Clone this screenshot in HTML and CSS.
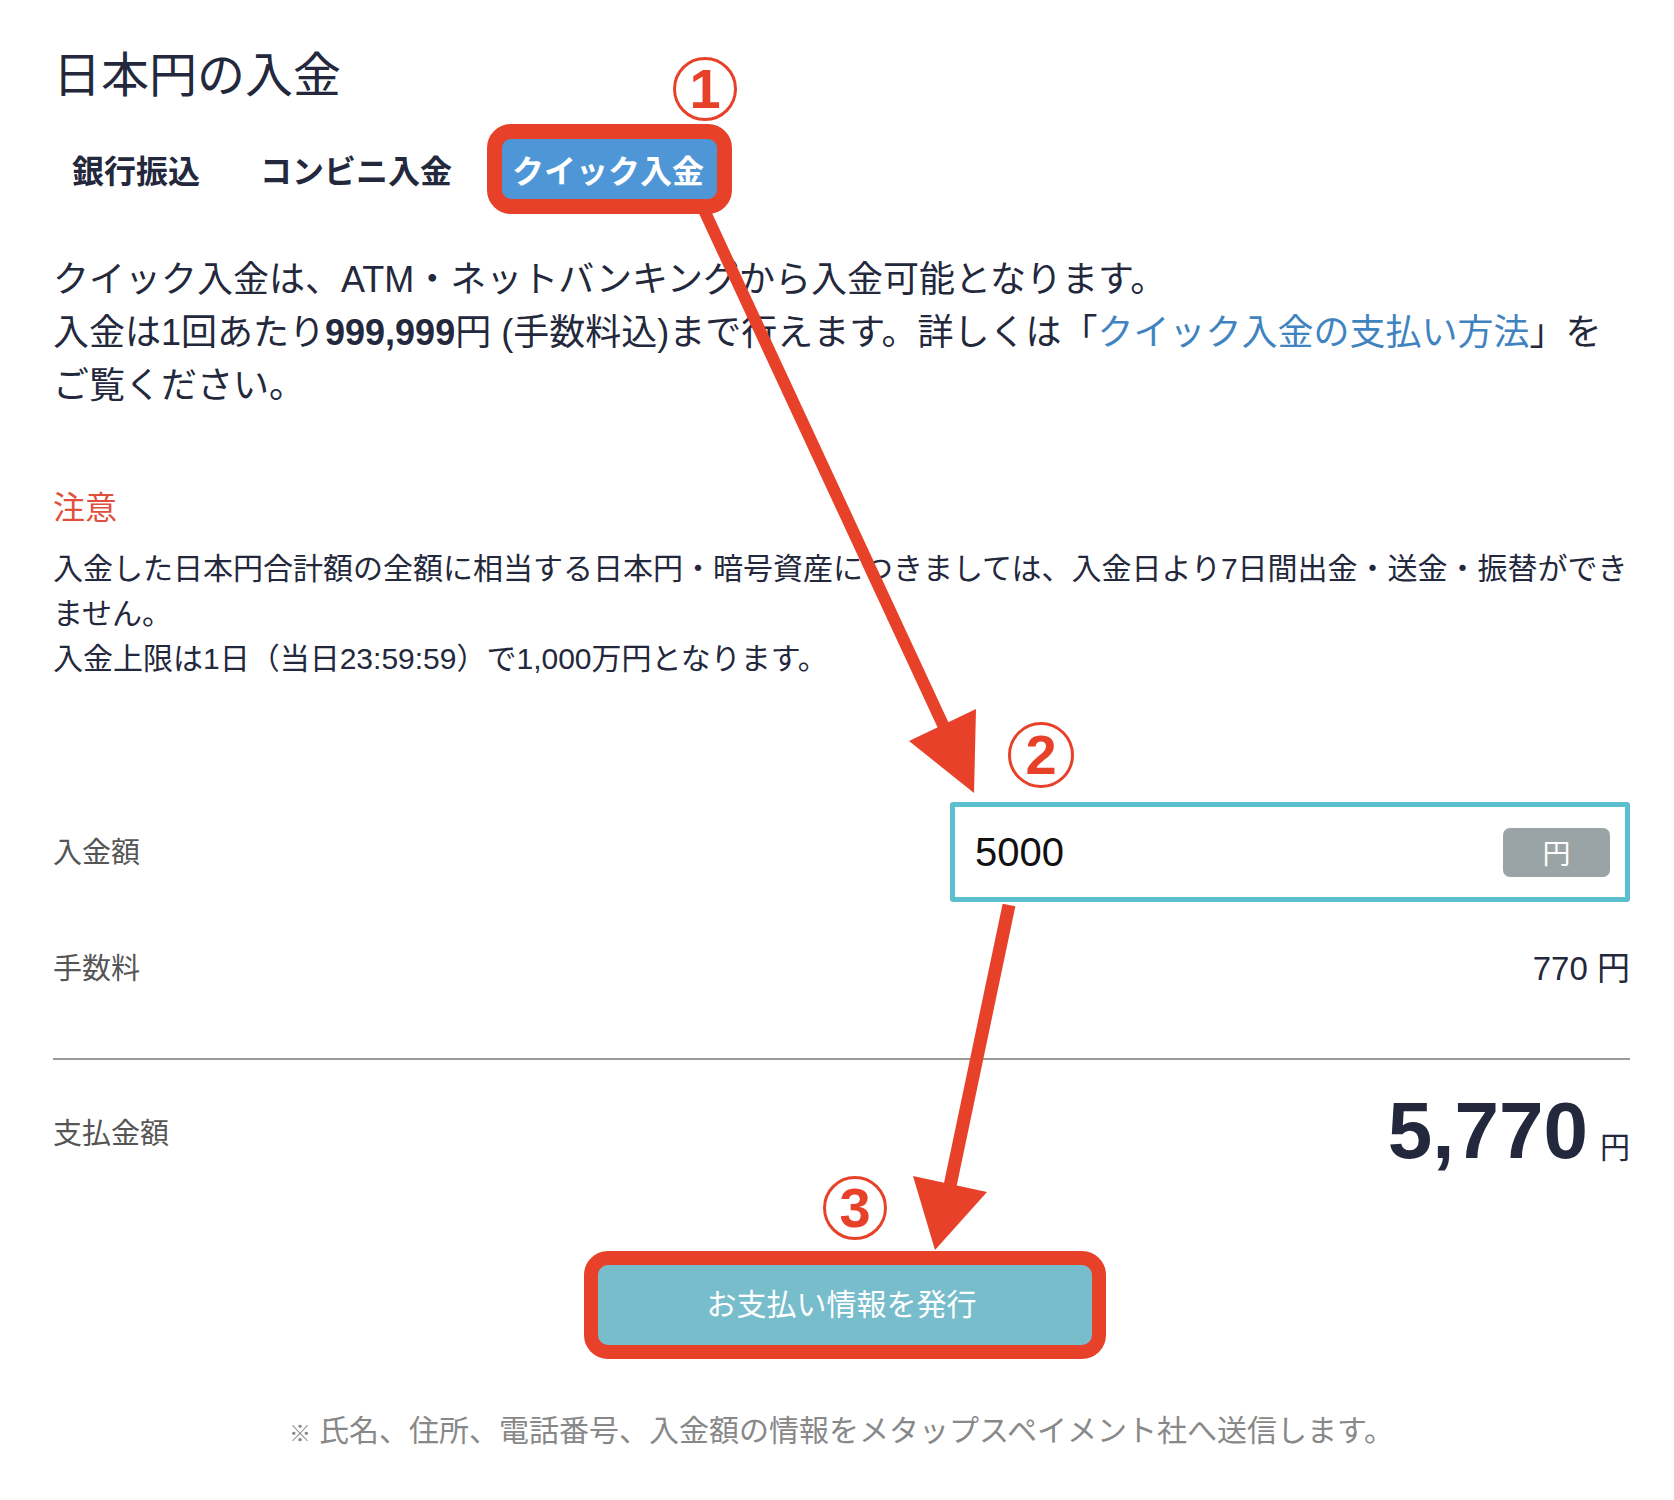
FILE: index.html
```html
<!DOCTYPE html>
<html lang="ja">
<head>
<meta charset="utf-8">
<title>日本円の入金</title>
<link rel="stylesheet" href="styles.css">
</head>
<body>
<main class="page">
  <h1 class="title">日本円の入金</h1>

  <nav class="tabs">
    <span class="tab">銀行振込</span>
    <span class="tab">コンビニ入金</span>
    <span class="tab is-active">クイック入金</span>
  </nav>

  <p class="lead">
    クイック入金は、ATM・ネットバンキングから入金可能となります。<br>
    入金は1回あたり<b>999,999</b>円 (手数料込)まで行えます。詳しくは「<a class="link" href="#">クイック入金の支払い方法</a>」を<br>
    ご覧ください。
  </p>

  <section class="notice">
    <h2 class="notice-title">注意</h2>
    <p class="notice-text">
      入金した日本円合計額の全額に相当する日本円・暗号資産につきましては、入金日より7日間出金・送金・振替ができ<br>
      ません。<br>
      入金上限は1日（当日23:59:59）で1,000万円となります。
    </p>
  </section>

  <div class="form">
    <div class="row row-amount">
      <span class="label">入金額</span>
      <div class="amount-field">
        <span class="amount-value">5000</span>
        <span class="unit-badge">円</span>
      </div>
    </div>
    <div class="row row-fee">
      <span class="label">手数料</span>
      <span class="fee">770 円</span>
    </div>
    <div class="row row-total">
      <span class="label">支払金額</span>
      <span class="total"><span class="total-num">5,770</span><span class="total-unit">円</span></span>
    </div>
  </div>

  <div class="actions">
    <button class="submit" type="button">お支払い情報を発行</button>
  </div>

  <p class="footnote"><span class="asterisk">※</span>氏名、住所、電話番号、入金額の情報をメタップスペイメント社へ送信します。</p>

  <!-- step annotations drawn over the form -->
  <div class="mark mark-tab"></div>
  <div class="mark mark-button"></div>
  <span class="step step-1">1</span>
  <span class="step step-2">2</span>
  <span class="step step-3">3</span>
  <svg class="arrows" width="1674" height="1500" viewBox="0 0 1674 1500">
    <g fill="#e8412a" stroke="#e8412a">
      <line x1="704" y1="210" x2="944" y2="727" stroke-width="12"/>
      <polygon points="909,741 976,709 974,793" stroke="none"/>
      <line x1="1009" y1="905" x2="950" y2="1186" stroke-width="13"/>
      <polygon points="913,1176 987,1192 935,1250" stroke="none"/>
    </g>
  </svg>
</main>
</body>
</html>
```

FILE: styles.css
```css
* {
  box-sizing: border-box;
}

html, body {
  margin: 0;
  padding: 0;
  background: #ffffff;
}

body {
  font-family: "Liberation Sans", "Noto Sans CJK JP", sans-serif;
  color: #23283c;
}

.page {
  position: relative;
  width: 1674px;
  min-height: 1500px;
  padding: 47px 44px 0 53px;
}

.title {
  margin: 0;
  font-size: 48px;
  line-height: 58px;
  font-weight: 400;
  color: #23283c;
}

/* tab bar */
.tabs {
  display: flex;
  gap: 22px;
  margin-top: 34px;
}

.tab {
  padding: 10px 19px;
  font-size: 32px;
  line-height: 47px;
  font-weight: 700;
  color: #23283c;
  border-radius: 8px;
}

.tab.is-active {
  background: #4f96d7;
  color: #ffffff;
}

.lead {
  margin: 47px 0 0;
  font-size: 36px;
  line-height: 53px;
  white-space: nowrap;
}

.lead b {
  font-weight: 700;
}

.link {
  color: #3f84c0;
  text-decoration: none;
}

/* notice */
.notice {
  margin-top: 74px;
}

.notice-title {
  margin: 0;
  font-size: 32px;
  line-height: 44px;
  font-weight: 400;
  color: #e0503c;
}

.notice-text {
  margin: 16px 0 0;
  font-size: 30px;
  line-height: 45px;
  white-space: nowrap;
}

/* amount form */
.form {
  margin-top: 121px;
}

.row {
  display: flex;
  align-items: center;
  justify-content: space-between;
}

.label {
  font-size: 29px;
  color: #555555;
}

.row-amount .label {
  margin-top: -4px;
}

.amount-field {
  display: flex;
  align-items: center;
  justify-content: space-between;
  width: 680px;
  height: 100px;
  padding: 0 15px 0 20px;
  border: 5px solid #5bbfcf;
  border-radius: 3px;
}

.amount-value {
  font-size: 40px;
  color: #111111;
}

.unit-badge {
  display: flex;
  align-items: center;
  justify-content: center;
  width: 107px;
  height: 49px;
  border-radius: 7px;
  background: #9aa3a5;
  color: #ffffff;
  font-size: 28px;
}

.row-fee {
  margin-top: 45px;
  line-height: 44px;
}

.fee {
  font-size: 33px;
  color: #23283c;
}

.row-total {
  margin-top: 67px;
  padding-top: 31px;
  border-top: 2px solid #9a9a9a;
}

.total {
  display: flex;
  align-items: baseline;
  gap: 12px;
}

.total-num {
  font-size: 80px;
  line-height: 80px;
  font-weight: 700;
  color: #23283c;
}

.total-unit {
  font-size: 30px;
  color: #23283c;
}

/* submit */
.actions {
  display: flex;
  justify-content: center;
  margin-top: 90px;
}

.submit {
  width: 502px;
  height: 88px;
  padding: 0 0 6px;
  border: 0;
  border-radius: 10px;
  background: #78bdcc;
  color: #ffffff;
  font-family: inherit;
  font-size: 30px;
}

.footnote {
  margin: 62px 0 0;
  text-align: center;
  font-size: 30px;
  line-height: 40px;
  color: #888888;
}

.asterisk {
  font-size: 22px;
  margin-right: 8px;
}

/* annotations */
.mark {
  position: absolute;
  border: 15px solid #e8412a;
  border-radius: 24px;
}

.mark-tab {
  left: 487px;
  top: 124px;
  width: 245px;
  height: 90px;
}

.mark-button {
  left: 584px;
  top: 1251px;
  width: 522px;
  height: 108px;
  border-width: 14px;
}

.step {
  position: absolute;
  display: flex;
  align-items: center;
  justify-content: center;
  width: 64px;
  height: 64px;
  border: 3px solid #e8412a;
  border-radius: 50%;
  color: #e8412a;
  font-size: 56px;
  font-weight: 700;
  line-height: 1;
}

.step-1 {
  left: 673px;
  top: 57px;
}

.step-2 {
  left: 1008px;
  top: 722px;
  width: 66px;
  height: 66px;
}

.step-3 {
  left: 823px;
  top: 1176px;
}

.arrows {
  position: absolute;
  left: 0;
  top: 0;
  pointer-events: none;
}
```
